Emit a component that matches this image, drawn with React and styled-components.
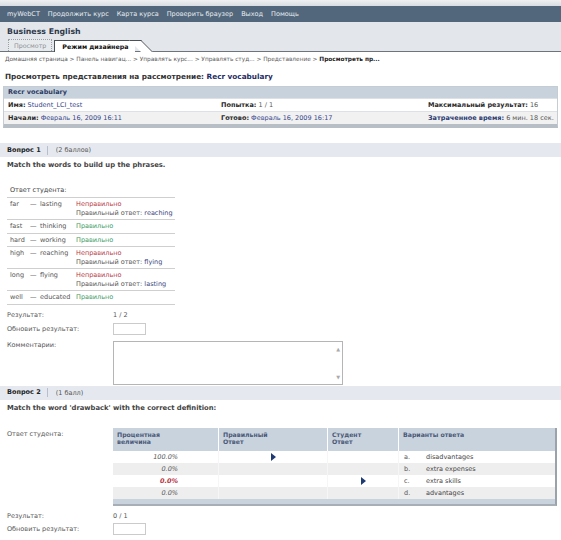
import styled, { createGlobalStyle } from 'styled-components';

const GlobalStyle = createGlobalStyle`
  body {
    margin: 0;
    background: #fff;
  }
`;

const Page = styled.div`
  width: 561px;
  height: 540px;
  overflow: hidden;
  font-family: 'DejaVu Sans', Verdana, sans-serif;
  font-size: 6.5px;
  color: #3a3a3a;
`;

const TopStrip = styled.div`
  height: 6px;
  background: linear-gradient(#eef0f2, #d9dde1);
`;

const Nav = styled.nav`
  height: 16px;
  background: #52677b;
  display: flex;
  align-items: center;
  gap: 8px;
  padding-left: 7px;
  color: #e9eef3;
  font-size: 6.5px;
`;

const Header = styled.header`
  height: 30px;
  background: #e3e7eb;
  border-bottom: 1px solid #6d747c;
  display: flex;
  flex-direction: column;
  justify-content: space-between;
  box-sizing: border-box;
`;

const CourseTitle = styled.div`
  padding: 5px 7px 0;
  font-weight: bold;
  font-size: 7.8px;
  color: #2f3a4c;
`;

const Tabs = styled.div`
  display: flex;
  align-items: flex-end;
  gap: 2px;
  padding-left: 8px;
`;

const Tab = styled.div`
  position: relative;
  height: 11px;
  line-height: 11px;
  padding: 0 ${(p) => (p.$active ? '7px' : '5px')};
  font-size: 6.3px;
  color: ${(p) => (p.$active ? '#111' : '#8a8f96')};
  font-weight: ${(p) => (p.$active ? 'bold' : 'normal')};
  background: ${(p) => (p.$active ? '#fff' : '#e7eaed')};
  border: ${(p) => (p.$active ? '1px solid #4b5159' : '1px dotted #9aa0a6')};
  border-right: ${(p) => (p.$active ? 'none' : '1px dotted #9aa0a6')};
  border-bottom: none;
  margin-bottom: ${(p) => (p.$active ? '-1px' : '0')};
  z-index: 1;

  &::after {
    display: ${(p) => (p.$active ? 'block' : 'none')};
    content: '';
    position: absolute;
    top: -1px;
    right: -6px;
    width: 12px;
    height: 12px;
    box-sizing: border-box;
    background: #fff;
    border-right: 1px solid #4b5159;
    border-top: 1px solid #4b5159;
    transform: skewX(45deg);
    transform-origin: top left;
  }
`;

const Breadcrumb = styled.div`
  padding: 4px 5px 0;
  height: 10px;
  color: #5a5a5a;
  font-size: 5.8px;

  b {
    color: #222;
  }
`;

const PageTitle = styled.h1`
  margin: 6px 0 0 5px;
  font-size: 7.3px;
  font-weight: bold;
  color: #333;

  span {
    color: #1f2d66;
  }
`;

const InfoBox = styled.div`
  margin: 5px 3px 0;
  border: 1px solid #c5ccd4;
  border-bottom: 4px solid #b7bec6;
`;

const InfoHead = styled.div`
  height: 11px;
  line-height: 11px;
  padding-left: 4px;
  background: #c8d2dd;
  color: #2d3c64;
  font-weight: bold;
`;

const InfoRow = styled.div`
  display: grid;
  grid-template-columns: 213px 207px 1fr;
  height: 12px;
  line-height: 12px;
  padding-left: 4px;
  background: ${(p) => (p.$shade ? '#f1f1f1' : '#fff')};
  border-top: 1px solid #dde1e5;
`;

const Label = styled.b`
  color: ${(p) => (p.$navy ? '#2b3a72' : '#2a2a2a')};
`;

const Value = styled.span`
  color: ${(p) => (p.$blue ? '#34458c' : '#555')};
`;

const QuestionBar = styled.div`
  margin-top: ${(p) => p.$top}px;
  height: 14px;
  background: #e5e9ef;
  display: flex;
  align-items: center;
  padding-left: 7px;

  b {
    color: #222;
    padding-right: 6px;
    border-right: 1px solid #b7bfca;
    height: 9px;
    line-height: 9px;
  }

  span {
    margin-left: 8px;
    color: #555;
  }
`;

const QuestionText = styled.div`
  padding: 4px 7px 0;
  font-weight: bold;
  font-size: 6.8px;
  color: #444;
`;

const MatchTable = styled.div`
  width: 168px;
  margin: 14px 0 0 7px;
`;

const MatchHead = styled.div`
  height: 14px;
  line-height: 14px;
  padding-left: 3px;
  border-bottom: 1px solid #cfcfcf;
`;

const MatchRow = styled.div`
  display: grid;
  grid-template-columns: 20px 10px 36px 1fr;
  padding: 2px 0 2px 3px;
  line-height: 8.5px;
  border-bottom: 1px solid #cfcfcf;
  color: #555;
`;

const Status = styled.div`
  color: ${(p) => (p.$ok ? '#3c9a5f' : '#b83a45')};

  div {
    color: #555;
  }

  em {
    font-style: normal;
    color: #3a4680;
  }
`;

const Fields = styled.div`
  display: grid;
  grid-template-columns: 106px 1fr;
  grid-template-rows: ${(p) => p.$rows};
  align-items: start;
  line-height: 8px;
  padding-left: 7px;
  margin-top: ${(p) => p.$top}px;
  color: #555;
`;

const ScoreInput = styled.div`
  width: 33px;
  height: 12px;
  border: 1px solid #cbcbcb;
  box-sizing: border-box;
  margin-top: -2px;
`;

const Comment = styled.div`
  width: 230px;
  height: 44px;
  border: 1px solid #b5b5b5;
  box-sizing: border-box;
  display: flex;
  flex-direction: column;
  justify-content: space-between;
  align-items: flex-end;
  padding: 3px 2px;
  color: #aaa;
  font-size: 5px;
`;

const ChoiceWrap = styled.div`
  display: grid;
  grid-template-columns: 106px 1fr;
  padding-left: 7px;
  margin-top: 16px;
  color: #555;

  & > span {
    margin-top: 2px;
  }
`;

const ChoiceTable = styled.div`
  width: 442px;
  background: #c9d3de;
  border-right: 2px solid #9aa2ac;
  border-bottom: 2px solid #a7aeb6;
  padding-bottom: 5px;
`;

const Grid = styled.div`
  display: grid;
  grid-template-columns: 105px 109px 71px 1fr;
`;

const HeadCell = styled.div`
  height: 23px;
  padding: 3px 4px 0;
  box-sizing: border-box;
  line-height: 7.5px;
  font-weight: bold;
  font-size: 6.2px;
  color: #4b5a78;
  border-left: ${(p) => (p.$first ? 'none' : '1px solid #fff')};
`;

const Cell = styled.div`
  height: 12px;
  line-height: 12px;
  background: ${(p) => (p.$shade ? '#eeeeee' : '#fff')};
  border-left: ${(p) => (p.$first ? 'none' : '1px solid #f6f6f6')};
  display: flex;
  align-items: center;
  justify-content: ${(p) => p.$justify || 'flex-start'};
  padding: ${(p) => p.$pad || '0'};
`;

const Percent = styled.span`
  font-style: italic;
  color: ${(p) => (p.$wrong ? '#b8333f' : '#555')};
  font-weight: ${(p) => (p.$wrong ? 'bold' : 'normal')};
`;

const Letter = styled.span`
  width: 22px;
  padding-left: 5px;
  color: #555;
`;

const Choice = styled.span`
  color: #444;
`;

const Arrow = () => (
  <svg width="5" height="8" viewBox="0 0 5 8">
    <path d="M0 0 L5 4 L0 8 Z" fill="#1e3a72" />
  </svg>
);

const matches = [
  ['far', 'lasting', false, 'reaching'],
  ['fast', 'thinking', true],
  ['hard', 'working', true],
  ['high', 'reaching', false, 'flying'],
  ['long', 'flying', false, 'lasting'],
  ['well', 'educated', true],
];

const choices = [
  { pct: '100.0%', correct: true, letter: 'a.', text: 'disadvantages' },
  { pct: '0.0%', letter: 'b.', text: 'extra expenses' },
  { pct: '0.0%', student: true, wrong: true, letter: 'c.', text: 'extra skills' },
  { pct: '0.0%', letter: 'd.', text: 'advantages' },
];

export default function App() {
  return (
    <>
      <GlobalStyle />
      <Page>
        <TopStrip />
        <Nav>
          <span>myWebCT</span>
          <span>Продолжить курс</span>
          <span>Карта курса</span>
          <span>Проверить браузер</span>
          <span>Выход</span>
          <span>Помощь</span>
        </Nav>

        <Header>
          <CourseTitle>Business English</CourseTitle>
          <Tabs>
            <Tab>Просмотр</Tab>
            <Tab $active>Режим дизайнера</Tab>
          </Tabs>
        </Header>

        <Breadcrumb>
          Домашняя страница &gt; Панель навигац... &gt; Управлять курс... &gt; Управлять студ... &gt;
          Представление &gt; <b>Просмотреть пр...</b>
        </Breadcrumb>

        <PageTitle>
          Просмотреть представления на рассмотрение: <span>Recr vocabulary</span>
        </PageTitle>

        <InfoBox>
          <InfoHead>Recr vocabulary</InfoHead>
          <InfoRow>
            <span><Label>Имя:</Label> <Value $blue>Student_LCI_test</Value></span>
            <span><Label>Попытка:</Label> <Value>1 / 1</Value></span>
            <span><Label>Максимальный результат:</Label> <Value>16</Value></span>
          </InfoRow>
          <InfoRow $shade>
            <span><Label>Начали:</Label> <Value $blue>Февраль 16, 2009 16:11</Value></span>
            <span><Label>Готово:</Label> <Value $blue>Февраль 16, 2009 16:17</Value></span>
            <span><Label $navy>Затраченное время:</Label> <Value>6 мин. 18 сек.</Value></span>
          </InfoRow>
        </InfoBox>

        <QuestionBar $top={15}>
          <b>Вопрос 1</b>
          <span>(2 баллов)</span>
        </QuestionBar>
        <QuestionText>Match the words to build up the phrases.</QuestionText>

        <MatchTable>
          <MatchHead>Ответ студента:</MatchHead>
          {matches.map(([a, b, ok, right]) => (
            <MatchRow key={a}>
              <span>{a}</span>
              <span>—</span>
              <span>{b}</span>
              <Status $ok={ok}>
                {ok ? 'Правильно' : 'Неправильно'}
                {!ok && (
                  <div>
                    Правильный ответ: <em>{right}</em>
                  </div>
                )}
              </Status>
            </MatchRow>
          ))}
        </MatchTable>

        <Fields $top={6} $rows="14px 16px auto">
          <span>Результат:</span>
          <span>1 / 2</span>
          <span>Обновить результат:</span>
          <ScoreInput />
          <span>Комментарии:</span>
          <Comment>
            <span>▲</span>
            <span>▼</span>
          </Comment>
        </Fields>

        <QuestionBar $top={1}>
          <b>Вопрос 2</b>
          <span>(1 балл)</span>
        </QuestionBar>
        <QuestionText>Match the word 'drawback' with the correct definition:</QuestionText>

        <ChoiceWrap>
          <span>Ответ студента:</span>
          <ChoiceTable>
            <Grid>
              <HeadCell $first>Процентная<br />величина</HeadCell>
              <HeadCell>Правильный<br />Ответ</HeadCell>
              <HeadCell>Студент<br />Ответ</HeadCell>
              <HeadCell>Варианты ответа</HeadCell>
              {choices.map((c, i) => {
                const shade = i % 2 === 1;
                return [
                  <Cell key={`p${i}`} $first $shade={shade} $justify="flex-end" $pad="0 40px 0 0">
                    <Percent $wrong={c.wrong}>{c.pct}</Percent>
                  </Cell>,
                  <Cell key={`c${i}`} $shade={shade} $justify="center">
                    {c.correct && <Arrow />}
                  </Cell>,
                  <Cell key={`s${i}`} $shade={shade} $justify="center">
                    {c.student && <Arrow />}
                  </Cell>,
                  <Cell key={`t${i}`} $shade={shade}>
                    <Letter>{c.letter}</Letter>
                    <Choice>{c.text}</Choice>
                  </Cell>,
                ];
              })}
            </Grid>
          </ChoiceTable>
        </ChoiceWrap>

        <Fields $top={6} $rows="13px 15px auto">
          <span>Результат:</span>
          <span>0 / 1</span>
          <span>Обновить результат:</span>
          <ScoreInput />
          <span />
          <Comment />
        </Fields>
      </Page>
    </>
  );
}
